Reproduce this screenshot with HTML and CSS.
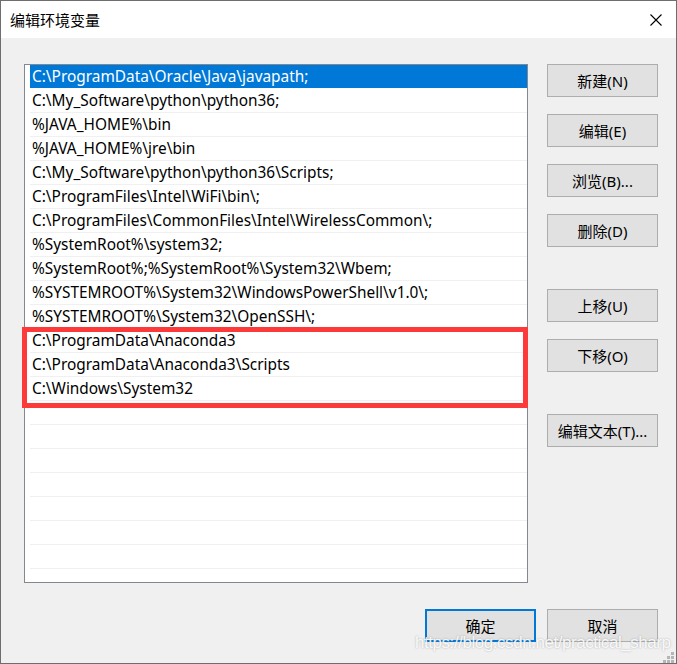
FILE: index.html
```html
<!DOCTYPE html>
<html lang="zh-CN">
<head>
<meta charset="utf-8">
<title>编辑环境变量</title>
<link rel="stylesheet" href="styles.css">
</head>
<body>
<div class="window">
  <div class="titlebar">
    <span class="title">编辑环境变量</span>
    <svg class="close" width="12" height="12" viewBox="0 0 12 12" aria-hidden="true">
      <path d="M0.5 0.5 L11.5 11.5 M11.5 0.5 L0.5 11.5" stroke="#000" stroke-width="1.1" fill="none"/>
    </svg>
  </div>
  <div class="content">
    <div class="main">
      <div class="listbox">
        <div class="rows">
          <div class="row selected">C:\ProgramData\Oracle\Java\javapath;</div>
          <div class="row">C:\My_Software\python\python36;</div>
          <div class="row">%JAVA_HOME%\bin</div>
          <div class="row">%JAVA_HOME%\jre\bin</div>
          <div class="row">C:\My_Software\python\python36\Scripts;</div>
          <div class="row">C:\ProgramFiles\Intel\WiFi\bin\;</div>
          <div class="row">C:\ProgramFiles\CommonFiles\Intel\WirelessCommon\;</div>
          <div class="row">%SystemRoot%\system32;</div>
          <div class="row">%SystemRoot%;%SystemRoot%\System32\Wbem;</div>
          <div class="row">%SYSTEMROOT%\System32\WindowsPowerShell\v1.0\;</div>
          <div class="row">%SYSTEMROOT%\System32\OpenSSH\;</div>
          <div class="row">C:\ProgramData\Anaconda3</div>
          <div class="row">C:\ProgramData\Anaconda3\Scripts</div>
          <div class="row">C:\Windows\System32</div>
          <div class="row"></div>
          <div class="row"></div>
          <div class="row"></div>
          <div class="row"></div>
          <div class="row"></div>
          <div class="row"></div>
          <div class="row"></div>
          <div class="row"></div>
        </div>
        <div class="highlight"></div>
      </div>
      <div class="side">
        <button class="btn">新建(N)</button>
        <button class="btn">编辑(E)</button>
        <button class="btn">浏览(B)...</button>
        <button class="btn">删除(D)</button>
        <button class="btn spaced">上移(U)</button>
        <button class="btn">下移(O)</button>
        <button class="btn spaced">编辑文本(T)...</button>
      </div>
    </div>
    <div class="footer">
      <button class="btn default">确定</button>
      <button class="btn">取消</button>
    </div>
  </div>
  <div class="watermark">https://blog.csdn.net/practical_sharp</div>
  <div class="grip">
    <span class="dot d1"></span>
    <span class="dot d2"></span>
    <span class="dot d3"></span>
    <span class="dot d4"></span>
    <span class="dot d5"></span>
    <span class="dot d6"></span>
  </div>
</div>
</body>
</html>
```

FILE: styles.css
```css
* {
  box-sizing: border-box;
}

html, body {
  margin: 0;
  padding: 0;
  background: #f0f0f0;
}

.window {
  position: relative;
  width: 677px;
  height: 664px;
  border: 1px solid #6e6e6e;
  background: #f0f0f0;
  display: flex;
  flex-direction: column;
  overflow: hidden;
  font-family: "Noto Sans", "Noto Sans CJK SC", sans-serif;
  color: #000;
}

.titlebar {
  height: 37px;
  flex: 0 0 37px;
  background: #fff;
  display: flex;
  align-items: center;
  justify-content: space-between;
  padding: 0 14px 0 9px;
}

.title {
  font-family: "Noto Sans CJK SC", sans-serif;
  font-size: 15px;
  line-height: 20px;
  padding-top: 1px;
}

.close {
  display: block;
  margin-top: 1px;
}

.content {
  flex: 1;
  display: flex;
  flex-direction: column;
  padding: 26px 18px 0 23px;
}

.main {
  display: flex;
  gap: 19px;
}

.listbox {
  position: relative;
  width: 504px;
  height: 519px;
  border: 1px solid #828790;
  background: #fff;
  padding: 0 0 0 5px;
}

.rows {
  height: 100%;
  overflow: hidden;
}

.row {
  height: 24px;
  border-bottom: 1px solid #f0f0f0;
  padding-left: 2px;
  font-size: 15.4px;
  line-height: 23px;
  white-space: nowrap;
}

.row.selected {
  background: #0078d7;
  color: #fff;
  border-bottom-color: #fff;
}

.highlight {
  position: absolute;
  left: -3px;
  top: 262px;
  width: 506px;
  height: 81px;
  border: 5px solid #fd3a3a;
  pointer-events: none;
}

.side {
  display: flex;
  flex-direction: column;
  gap: 17px;
}

.btn {
  width: 111px;
  height: 33px;
  border: 1px solid #adadad;
  background: #e1e1e1;
  font-family: "Noto Sans", "Noto Sans CJK SC", sans-serif;
  font-size: 15px;
  color: #000;
  padding: 0;
  line-height: 20px;
  white-space: nowrap;
}

.btn.spaced {
  margin-top: 25px;
}

.btn.default {
  border: 2px solid #0078d7;
}

.footer {
  display: flex;
  justify-content: flex-end;
  gap: 11px;
  margin-top: 26px;
}

.watermark {
  position: absolute;
  left: 414px;
  top: 631px;
  font-family: "Liberation Sans", Arial, sans-serif;
  font-size: 17px;
  letter-spacing: -0.45px;
  line-height: 22px;
  color: rgba(255, 255, 255, 0.9);
  text-shadow: 0 0 2px rgba(90, 90, 90, 0.45);
  white-space: nowrap;
  pointer-events: none;
}

.grip {
  position: absolute;
  right: 2px;
  bottom: 0;
  width: 12px;
  height: 11px;
}

.dot {
  position: absolute;
  width: 3px;
  height: 3px;
  background: #b5b5b5;
}

.d1 { right: 0; top: 0; }
.d2 { right: 0; top: 4px; }
.d3 { right: 4px; top: 4px; }
.d4 { right: 0; top: 8px; }
.d5 { right: 4px; top: 8px; }
.d6 { right: 8px; top: 8px; }
```
